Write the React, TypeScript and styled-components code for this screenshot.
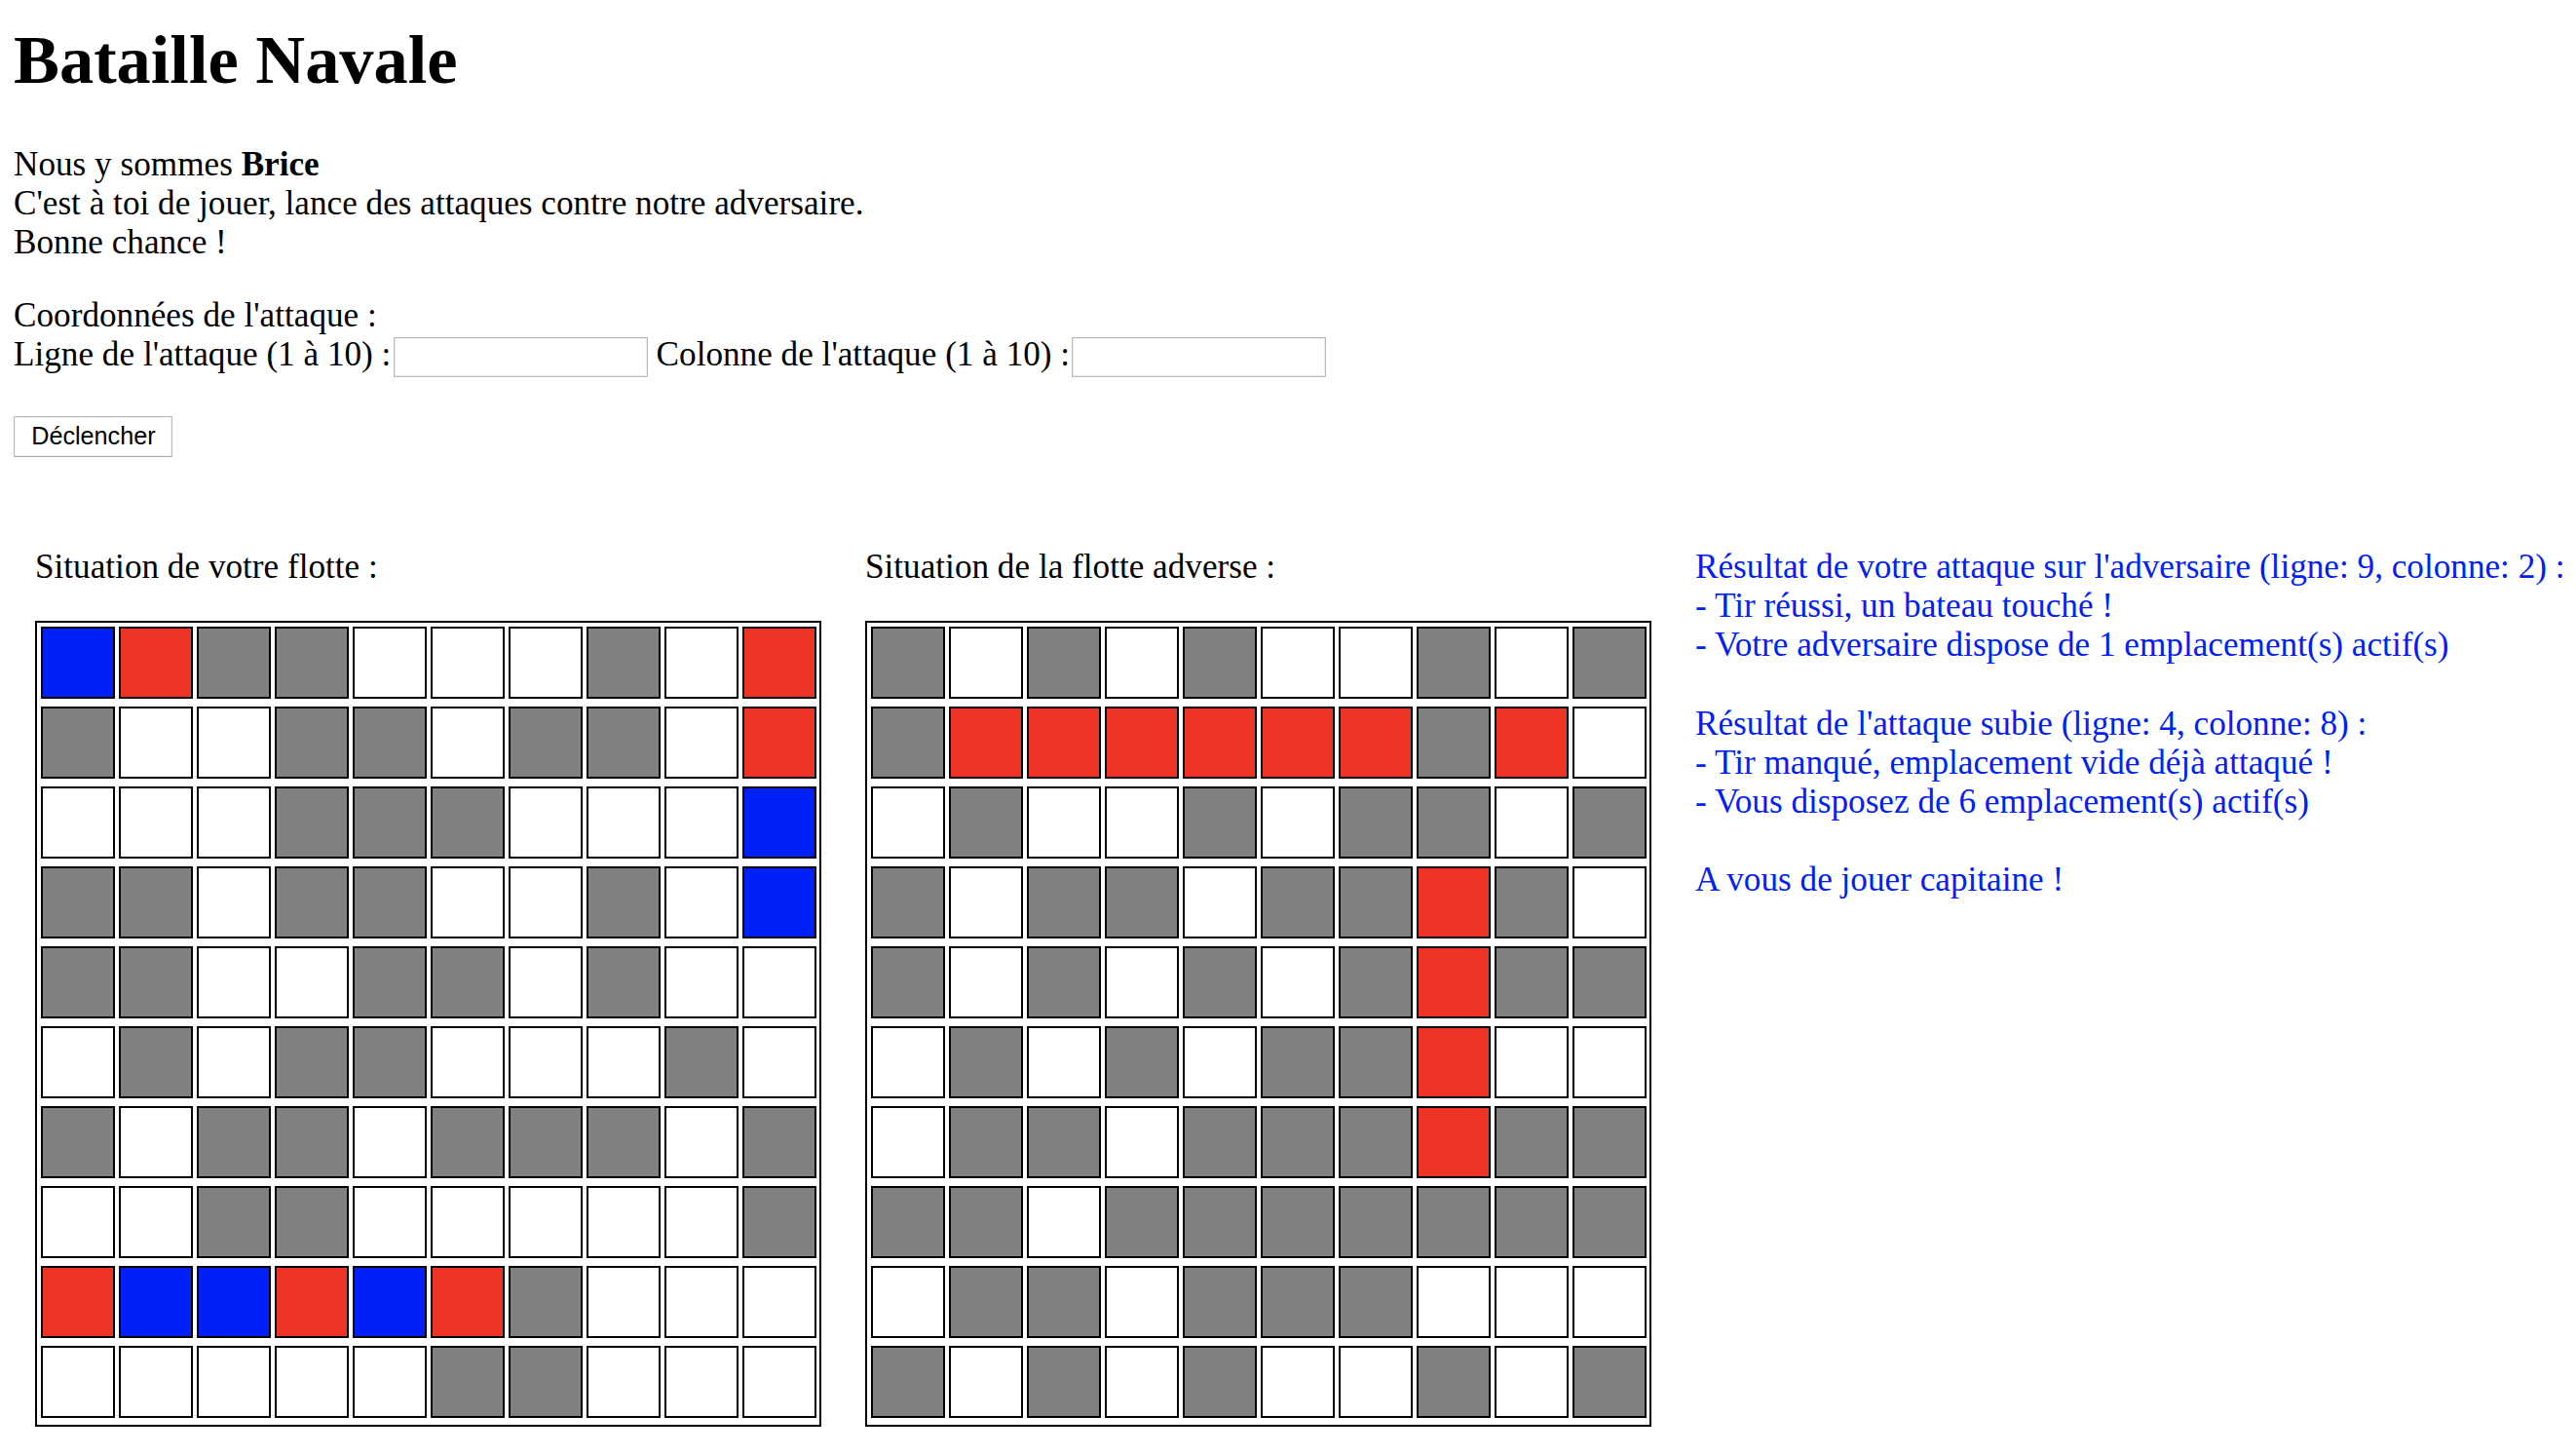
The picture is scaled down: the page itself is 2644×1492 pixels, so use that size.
import React from "react";
import styled, { createGlobalStyle } from "styled-components";

type CellState = "W" | "G" | "R" | "B";

const GlobalStyle = createGlobalStyle`
  html, body {
    margin: 0;
    padding: 0;
    background: #ffffff;
  }
`;

const Page = styled.div`
  font-family: "Liberation Serif", "Times New Roman", serif;
  font-size: 35.2px;
  line-height: normal;
  color: #000000;
  padding: 21px 0 0 14px;
`;

const Title = styled.h1`
  font-size: 70.4px;
  font-weight: bold;
  line-height: normal;
  margin: 0 0 47px 0;
`;

const Intro = styled.div`
  margin: 0 0 35.2px 0;
`;

const AttackForm = styled.form`
  margin: 0;
`;

const FieldRow = styled.div`
  display: flex;
  align-items: flex-start;
  white-space: pre;
`;

const CoordInput = styled.input`
  box-sizing: border-box;
  width: 261px;
  height: 41px;
  margin: 2.3px 0 0 2.2px;
  padding: 0 4px;
  border: 1px solid #b9b9b9;
  box-shadow: inset 0 0 0 1px #ececec;
  background: #ffffff;
  font-family: "Liberation Sans", Arial, sans-serif;
  font-size: 24px;
  outline: none;
`;

const Spacer = styled.span<{ $w: number }>`
  display: inline-block;
  width: ${(p) => p.$w}px;
`;

const FireButton = styled.button`
  box-sizing: border-box;
  display: block;
  width: 163px;
  height: 42px;
  margin: 39.3px 0 0 0.4px;
  padding: 0;
  background: #ffffff;
  border: 1px solid #bcbcbc;
  border-bottom-color: #a9a9a9;
  box-shadow: inset 0 0 0 1px #f1f1f1;
  font-family: "Liberation Sans", Arial, sans-serif;
  font-size: 25.2px;
  color: #000000;
`;

const Arena = styled.div`
  display: flex;
  align-items: flex-start;
  gap: 45px;
  margin-top: 93.5px;
  padding-left: 22px;
`;

const FleetColumn = styled.section`
  display: flex;
  flex-direction: column;
  align-items: flex-start;
`;

const SectionLabel = styled.div`
  margin: 0 0 35px 0;
  white-space: nowrap;
`;

const Board = styled.div`
  display: grid;
  grid-template-columns: repeat(10, 76px);
  grid-auto-rows: 74px;
  column-gap: 4px;
  row-gap: 8px;
  padding: 4px 3px 7px 4px;
  border: 2px solid #000000;
`;

const palette: Record<CellState, string> = {
  W: "#ffffff",
  G: "#808080",
  R: "#ee3424",
  B: "#0021f5",
};

const Cell = styled.div<{ $state: CellState }>`
  box-sizing: border-box;
  width: 76px;
  height: 74px;
  border: 2px solid #000000;
  background: ${(p) => palette[p.$state]};
`;

const Results = styled.div`
  color: #0021f5;
  white-space: nowrap;
`;

const ResultLine = styled.div<{ $blank?: boolean }>`
  min-height: ${(p) => (p.$blank ? "40.45px" : "0")};
`;

const myFleet = [
  "BRGGWWWGWR",
  "GWWGGWGGWR",
  "WWWGGGWWWB",
  "GGWGGWWGWB",
  "GGWWGGWGWW",
  "WGWGGWWWGW",
  "GWGGWGGGWG",
  "WWGGWWWWWG",
  "RBBRBRGWWW",
  "WWWWWGGWWW",
];

const enemyFleet = [
  "GWGWGWWGWG",
  "GRRRRRRGRW",
  "WGWWGWGGWG",
  "GWGGWGGRGW",
  "GWGWGWGRGG",
  "WGWGWGGRWW",
  "WGGWGGGRGG",
  "GGWGGGGGGG",
  "WGGWGGGWWW",
  "GWGWGWWGWG",
];

const FleetBoard: React.FC<{ rows: string[] }> = ({ rows }) => (
  <Board>
    {rows.flatMap((row, r) =>
      row.split("").map((c, i) => <Cell key={`${r}-${i}`} $state={c as CellState} />)
    )}
  </Board>
);

const resultLines = [
  "Résultat de votre attaque sur l'adversaire (ligne: 9, colonne: 2) :",
  "- Tir réussi, un bateau touché !",
  "- Votre adversaire dispose de 1 emplacement(s) actif(s)",
  "",
  "Résultat de l'attaque subie (ligne: 4, colonne: 8) :",
  "- Tir manqué, emplacement vide déjà attaqué !",
  "- Vous disposez de 6 emplacement(s) actif(s)",
  "",
  "A vous de jouer capitaine !",
];

export default function App() {
  return (
    <>
      <GlobalStyle />
      <Page>
        <Title>Bataille Navale</Title>
        <Intro>
          Nous y sommes <b>Brice</b>
          <br />
          C'est à toi de jouer, lance des attaques contre notre adversaire.
          <br />
          Bonne chance !
        </Intro>
        <AttackForm onSubmit={(e) => e.preventDefault()}>
          <div>Coordonnées de l'attaque :</div>
          <FieldRow>
            <span>Ligne de l'attaque (1 à 10) :</span>
            <CoordInput type="text" />
            <Spacer $w={9} />
            <span>Colonne de l'attaque (1 à 10) :</span>
            <CoordInput type="text" />
          </FieldRow>
          <FireButton type="submit">Déclencher</FireButton>
        </AttackForm>
        <Arena>
          <FleetColumn>
            <SectionLabel>Situation de votre flotte :</SectionLabel>
            <FleetBoard rows={myFleet} />
          </FleetColumn>
          <FleetColumn>
            <SectionLabel>Situation de la flotte adverse :</SectionLabel>
            <FleetBoard rows={enemyFleet} />
          </FleetColumn>
          <Results>
            {resultLines.map((line, i) => (
              <ResultLine key={i} $blank={line === ""}>
                {line}
              </ResultLine>
            ))}
          </Results>
        </Arena>
      </Page>
    </>
  );
}
